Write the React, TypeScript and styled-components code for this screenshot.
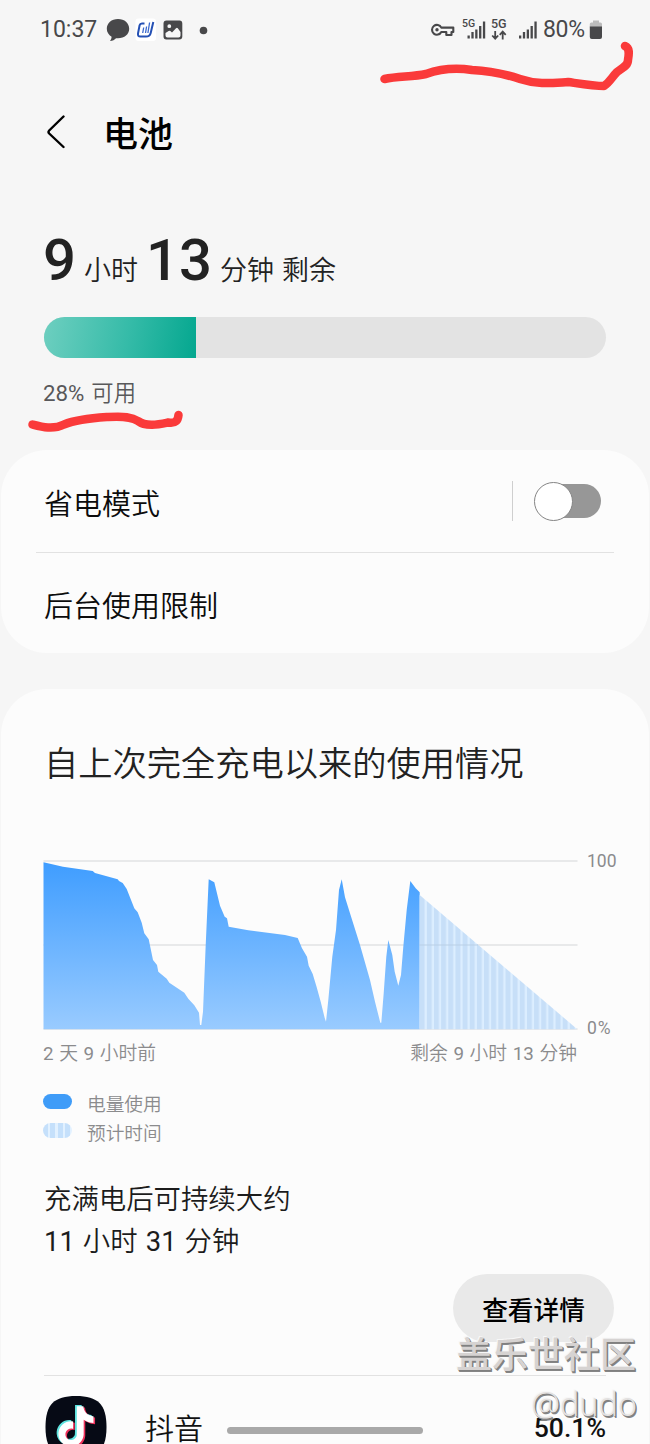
import React, { useState } from "react";
import styled, { createGlobalStyle, css } from "styled-components";

const GlobalStyle = createGlobalStyle`
  *, *::before, *::after { box-sizing: border-box; }
  body {
    margin: 0;
    background: #f6f6f6;
    color: #1c1c1e;
    font-family: Roboto, "Noto Sans CJK SC", sans-serif;
    font-weight: 350;
  }
`;

const Screen = styled.main`
  position: relative;
  width: 650px;
  height: 1444px;
  overflow: hidden;
  background: #f6f6f6;
`;

/* Latin figures are set one step heavier than the Chinese text round them. */
const Num = styled.span`
  font-weight: 400;
`;

/* ---------- status bar ---------- */

const StatusBar = styled.header`
  display: flex;
  align-items: center;
  justify-content: space-between;
  height: 60px;
  padding: 0 47px 0 40px;
  color: #48484a;
`;

const StatusGroup = styled.div`
  display: flex;
  align-items: center;
`;

const StatusText = styled.span<{ $tight?: boolean; $gap?: number }>`
  margin-left: ${(p) => p.$gap ?? 0}px;
  font-size: 23px;
  font-weight: 400;
  line-height: 30px;
  letter-spacing: ${(p) => (p.$tight ? "-0.2px" : "0")};
`;

const StatusIcon = styled.svg<{ $gap: number }>`
  display: block;
  flex: none;
  overflow: visible;
  margin-left: ${(p) => p.$gap}px;
`;

/* ---------- title ---------- */

const TitleBar = styled.div`
  display: flex;
  align-items: center;
  height: 148px;
  padding-left: 46px;
`;

const BackButton = styled.button`
  display: flex;
  padding: 0;
  margin: -4px 37px 0 0;
  border: 0;
  background: none;
`;

const Title = styled.h1`
  margin: 4px 0 0;
  color: #000;
  font-size: 35px;
  font-weight: 500;
  line-height: 48px;
`;

/* ---------- remaining charge ---------- */

const Summary = styled.section`
  padding: 17px 44px 0;
  height: 242px;
`;

const TimeLeft = styled.div`
  display: flex;
  align-items: baseline;
  height: 70px;
  line-height: 70px;
  color: #222;
`;

const BigNumber = styled.span`
  margin-left: -1px;
  font-size: 58px;
  font-weight: 500;
`;

const Unit = styled.span<{ $before: number; $after?: number }>`
  margin: 0 ${(p) => p.$after ?? 0}px 0 ${(p) => p.$before}px;
  font-size: 27px;
`;

const ChargeTrack = styled.div`
  width: 562px;
  height: 41px;
  margin-top: 22px;
  overflow: hidden;
  border-radius: 21px;
  background: #e3e3e3;
`;

const ChargeFill = styled.div`
  height: 100%;
  background: linear-gradient(100deg, #6ecfc0 0%, #35bba8 55%, #04a78f 100%);
`;

const Available = styled.p`
  margin: 20px 0 0 -1px;
  color: #58585a;
  font-size: 22.3px;
  line-height: 30px;
  word-spacing: 1.5px;
`;

/* ---------- cards ---------- */

const Card = styled.section<{ $last?: boolean }>`
  margin: 0 1px;
  border-radius: 46px;
  background: #fcfcfc;
  ${(p) =>
    p.$last &&
    css`
      margin-top: 36px;
      padding: 53px 43px 0;
      height: 800px;
    `}
`;

const SettingRow = styled.div<{ $height: number }>`
  display: flex;
  align-items: center;
  justify-content: space-between;
  height: ${(p) => p.$height}px;
  padding: 2px 48px 0 43px;
  color: #0c0c0c;
  font-size: 29px;
`;

const Divider = styled.hr<{ $inset: string }>`
  height: 1px;
  margin: ${(p) => p.$inset};
  border: 0;
  background: #e2e2e2;
`;

const SwitchArea = styled.div`
  display: flex;
  align-items: center;
  height: 40px;
  margin-top: -2px;
  padding-left: 22px;
  border-left: 1px solid #cfcfcf;
`;

const Track = styled.button<{ $on: boolean }>`
  display: flex;
  align-items: center;
  justify-content: ${(p) => (p.$on ? "flex-end" : "flex-start")};
  width: 66px;
  height: 34px;
  padding: 0;
  border: 0;
  border-radius: 17px;
  background: ${(p) => (p.$on ? "#3e91ff" : "#979797")};
`;

const Thumb = styled.span`
  flex: none;
  width: 39px;
  height: 39px;
  margin-left: -1px;
  border: 1.5px solid #858585;
  border-radius: 50%;
  background: #fff;
`;

/* ---------- usage ---------- */

const UsageTitle = styled.h2`
  margin: 0;
  color: #222;
  font-size: 34.25px;
  font-weight: 350;
  line-height: 44px;
  white-space: nowrap;
`;

const ChartRow = styled.div`
  display: flex;
  height: 187px;
  margin-top: 65px;
  margin-left: -1px;
`;

const Chart = styled.svg`
  display: block;
  flex: none;
  margin-top: 9px;
`;

const AxisLabels = styled.div`
  display: flex;
  flex-direction: column;
  justify-content: space-between;
  margin-left: 9px;
  color: #8b8b8d;
  font-size: 17.5px;
  font-weight: 400;
  line-height: 20px;
`;

const AxisLabel = styled.span<{ $spaced?: boolean }>`
  letter-spacing: ${(p) => (p.$spaced ? "1px" : "0")};
`;

const TimeLabels = styled.div`
  display: flex;
  justify-content: space-between;
  width: 534px;
  margin: 3px 0 0 -1px;
  color: #8b8b8d;
  font-size: 18.8px;
  line-height: 26px;
  word-spacing: 1px;
`;

const Legend = styled.ul`
  margin: 21px 0 0;
  padding: 0;
  list-style: none;
`;

const LegendItem = styled.li`
  display: flex;
  align-items: flex-start;
  gap: 15px;
  height: 29px;
  margin-left: -1px;
  color: #8b8b8d;
  font-size: 18.7px;
  line-height: 34px;
`;

const Swatch = styled.span<{ $striped?: boolean }>`
  width: 29px;
  height: 15px;
  margin-top: 6px;
  border-radius: 8px;
  background: ${(p) =>
    p.$striped
      ? "repeating-linear-gradient(90deg, #c5e0fb 0 5px, #e2f1ff 5px 7.3px)"
      : "#3f9cf8"};
`;

const FullCharge = styled.p`
  margin: 33px 0 0;
  color: #1c1c1c;
  font-size: 27.4px;
  line-height: 42px;
  word-spacing: 1.4px;
`;

const Actions = styled.div`
  display: flex;
  justify-content: flex-end;
  margin: 11px -8px 0 0;
`;

const DetailsButton = styled.button`
  width: 161px;
  height: 68px;
  padding: 6px 0 0;
  border: 0;
  border-radius: 34px;
  background: #e9e9e9;
  color: #000;
  font: 500 25.7px/30px Roboto, "Noto Sans CJK SC", sans-serif;
`;

const AppRow = styled.div`
  display: flex;
  align-items: center;
  height: 64px;
  margin-top: 19px;
  padding: 0 0 0 1px;
  color: #111;
`;

const AppName = styled.span`
  flex: 1;
  margin: 6px 0 0 38px;
  font-size: 29px;
  line-height: 36px;
`;

const AppShare = styled.span`
  margin-top: 2px;
  font-size: 26.6px;
  font-weight: 500;
  line-height: 28px;
`;

/* ---------- overlays ---------- */

const HomeHandle = styled.div`
  position: absolute;
  left: 227px;
  top: 1427px;
  width: 196px;
  height: 7px;
  border-radius: 4px;
  background: #a9a9a9;
`;

const Watermark = styled.div`
  position: absolute;
  right: 14px;
  top: 1331px;
  display: flex;
  flex-direction: column;
  align-items: flex-end;
  color: #d6d3d2;
  text-shadow: 1px 1px 0 #808080, 1.5px 1.5px 0 #858585, -1px -1px 0 #f7f7f7;
`;

const Community = styled.span`
  font-size: 36px;
  font-weight: 500;
  line-height: 50px;
`;

const Handle = styled.span`
  margin-right: -1px;
  color: #e4e2e1;
  font-family: "Noto Sans", sans-serif;
  font-size: 32.3px;
  line-height: 44px;
`;

const Scribbles = styled.svg`
  position: absolute;
  inset: 0;
  pointer-events: none;
`;

/* Battery history, in chart units: x runs with time, y downwards from 100 %. */
const history =
  "0.5,1.3 20,5.7 49.7,10 52,12 74.7,18.3 76,20 79.7,22 83.7,28 91.3,47.3 94.7,51.3 98.7,61.7 101.3,72.3 105.7,78.3 110,99 114,104 115.3,110.7 123.7,117.7 126.3,121.7 141.3,131.7 145.3,137.7 151.3,144.3 156,151.7 157,164 158.3,164 160,150.7 162.7,84 165.7,18.3 171.3,21.3 177,44.7 181.7,55.7 184,57.3 185.7,65.7 205.3,69.3 242,74 254.7,77 259,87.3 264,95.7 265.7,104.7 269.7,113 273.7,126.3 277.7,140.7 281.7,157 283,160.7 285.3,139 289.3,95.7 293,69 296,29 298.7,18.3 302,36.3 307,52.3 317,84 327,119 332,140.7 337.3,161.7 338.3,161.7 340.7,132.3 343.3,95.7 345.3,79 349.3,94 351.7,110.7 355.3,124.7 358,114 360.3,85.7 363.7,49 367.3,20 372.7,27.3 376.7,31.3";

function UsageChart() {
  return (
    <Chart width="535" height="170" viewBox="0 -1 535 170">
      <defs>
        <linearGradient id="level" x1="0" y1="0" x2="0" y2="1">
          <stop offset="0" stopColor="#3f9dff" />
          <stop offset="1" stopColor="#99cbff" />
        </linearGradient>
        <pattern id="stripes" x="376.7" width="7.15" height="10" patternUnits="userSpaceOnUse">
          <rect width="7.15" height="10" fill="#c7dff8" />
          <rect x="4.9" width="2.25" height="10" fill="#dceeff" />
        </pattern>
      </defs>
      <path d="M0.5 0H534.5M0.5 84H534.5M0.5 168H534.5" stroke="#e1e2e4" strokeWidth="1.6" />
      <polygon points={`${history} 376.7,168.2 0.5,168.2`} fill="url(#level)" />
      <polygon points="376.7,34 534.3,168.2 376.7,168.2" fill="url(#stripes)" />
      <path d="M376.7 84H435" stroke="#b9cfe6" strokeWidth="1.2" />
    </Chart>
  );
}

function SignalBars({ x }: { x: number }) {
  const tops = [15.5, 12, 9.5, 6, 1.5];
  return (
    <>
      {tops.map((top, i) => (
        <rect key={top} x={x + i * 3.85} y={top} width="2.3" height={18.5 - top} fill="#48484a" />
      ))}
    </>
  );
}

const notePath =
  "M12.525.02c1.31-.02 2.61-.01 3.91-.02.08 1.53.63 3.09 1.75 4.17 1.12 1.11 2.7 1.62 4.24 1.79v4.03c-1.44-.05-2.89-.35-4.2-.97-.57-.26-1.1-.59-1.62-.93-.01 2.92.01 5.84-.02 8.75-.08 1.4-.54 2.79-1.35 3.94-1.31 1.92-3.58 3.17-5.91 3.21-1.43.08-2.86-.31-4.08-1.03-2.02-1.19-3.44-3.37-3.65-5.71-.02-.5-.03-1-.01-1.49.18-1.9 1.12-3.72 2.58-4.96 1.66-1.44 3.98-2.13 6.15-1.72.02 1.48-.04 2.96-.04 4.44-.99-.32-2.15-.23-3.02.37-.63.41-1.11 1.04-1.36 1.75-.21.51-.15 1.07-.14 1.61.24 1.64 1.82 3.02 3.5 2.87 1.12-.01 2.19-.66 2.77-1.61.19-.33.4-.67.41-1.06.1-1.79.06-3.57.07-5.36.01-4.03-.01-8.05.02-12.07z";

function DouyinIcon() {
  return (
    <svg width="62" height="62" viewBox="0 0 62 62">
      <path d="M31 0C53 0 61.5 8.5 61.5 31S53 62 31 62 .5 53.5 .5 31 9 0 31 0Z" fill="#060a15" />
      <path d={notePath} transform="translate(9 9) scale(1.68)" fill="#5de3df" />
      <path d={notePath} transform="translate(12.4 11.4) scale(1.68)" fill="#f0325c" />
      <path d={notePath} transform="translate(10.8 10.2) scale(1.68)" fill="#fff" />
    </svg>
  );
}

export default function App() {
  const [powerSaving, setPowerSaving] = useState(false);
  const charge = 27;

  return (
    <Screen>
      <GlobalStyle />
      <StatusBar>
        <StatusGroup>
          <StatusText>10:37</StatusText>
          <StatusIcon $gap={9} width="24" height="24" viewBox="0 0 24 24">
            <path d="M12 1C5.5 1 .8 5.2 .8 10.8c0 3.4 1.9 6.2 4.8 8-.1 1.6-.6 3-1.6 4.2 2.6-.1 4.7-1.2 6-2.8 7.6.9 13.2-3.4 13.2-9.4C23.2 5.2 18.5 1 12 1Z" fill="#48484a" />
          </StatusIcon>
          <StatusIcon $gap={5} width="22" height="24" viewBox="0 0 22 24">
            <rect x="0.5" y="0.5" width="20.5" height="22.5" rx="3" fill="#fff" />
            <path d="M9.5 5.5H7Q5 5.5 4.6 7.3L3 15.5Q2.6 18.6 5.4 18.6H11Q14.8 18.6 15.7 15L18.3 4" fill="none" stroke="#2450b4" strokeWidth="2" />
            <path d="M8.7 9.5 7.7 15M11.6 8.5 10.5 15M14.6 4.5 12.9 15" fill="none" stroke="#3867cc" strokeWidth="1.3" />
          </StatusIcon>
          <StatusIcon $gap={6} width="20" height="20" viewBox="0 0 20 20">
            <path fillRule="evenodd" d="M3.5.5h13Q19.3.5 19.3 3.5v13q0 3-3 3h-13q-2.8 0-2.8-3v-13q0-3 3-3ZM2.5 13v2.5q0 2 2 2h11q2 0 2-2v-3.5L14.8 8.3Q14 7.4 13 8.3L9 12.5 7.3 11Q6.5 10.3 5.6 11ZM6.3 4.3a1.9 1.9 0 1 0 0 3.8 1.9 1.9 0 0 0 0-3.8Z" fill="#48484a" />
          </StatusIcon>
          <StatusIcon $gap={16} width="9" height="9" viewBox="0 0 9 9">
            <circle cx="4.5" cy="4.5" r="3.8" fill="#48484a" />
          </StatusIcon>
        </StatusGroup>
        <StatusGroup>
          <StatusIcon $gap={0} width="24" height="16" viewBox="0 0 24 16">
            <path d="M10.3 5.6H22.3V10H20.5V13H15.3V10H10.3A4.9 4.9 0 1 1 10.3 5.6Z" fill="none" stroke="#48484a" strokeWidth="2.1" strokeLinejoin="round" />
            <circle cx="6" cy="7.8" r="1.7" fill="#48484a" />
          </StatusIcon>
          <StatusIcon $gap={7} width="24" height="20" viewBox="0 0 24 20">
            <text x="0" y="7" fontSize="10.5" fontWeight="500" fill="#48484a">5G</text>
            <SignalBars x={5.5} />
          </StatusIcon>
          <StatusIcon $gap={5} width="17" height="22" viewBox="0 0 17 22">
            <text x="0" y="9.3" fontSize="12.5" fontWeight="500" fill="#48484a">5G</text>
            <path d="M4.2 12v7.5M1.2 16.5l3 3.2 3-3.2M11.7 20.5V13M8.7 15.8l3-3.2 3 3.2" fill="none" stroke="#48484a" strokeWidth="1.8" />
          </StatusIcon>
          <StatusIcon $gap={11} width="20" height="20" viewBox="0 0 20 20">
            <SignalBars x={0} />
          </StatusIcon>
          <StatusText $tight $gap={4}>80%</StatusText>
          <StatusIcon $gap={4} width="14" height="20" viewBox="0 0 14 20">
            <path d="M4 0.5h6v2h1.5q1.5 0 1.5 1.5v3.5H.8V4q0-1.5 1.5-1.5H4Z" fill="#bcbcbc" />
            <path d="M.8 6.5H13V17q0 2-2 2H2.8q-2 0-2-2Z" fill="#48484a" />
          </StatusIcon>
        </StatusGroup>
      </StatusBar>

      <TitleBar>
        <BackButton aria-label="返回">
          <svg width="20" height="34" viewBox="0 0 20 34">
            <path d="M17.5 1.5 3.2 15.5Q1.8 17 3.2 18.5L17.5 32" fill="none" stroke="#000" strokeWidth="2.4" strokeLinecap="round" />
          </svg>
        </BackButton>
        <Title>电池</Title>
      </TitleBar>

      <Summary>
        <TimeLeft>
          <BigNumber>9</BigNumber>
          <Unit $before={8} $after={9}>小时</Unit>
          <BigNumber>13</BigNumber>
          <Unit $before={8} $after={8}>分钟</Unit>
          <Unit $before={0}>剩余</Unit>
        </TimeLeft>
        <ChargeTrack>
          <ChargeFill style={{ width: `${charge}%` }} />
        </ChargeTrack>
        <Available>
          <Num>28%</Num> 可用
        </Available>
      </Summary>

      <Card>
        <SettingRow $height={102}>
          省电模式
          <SwitchArea>
            <Track
              $on={powerSaving}
              role="switch"
              aria-checked={powerSaving}
              onClick={() => setPowerSaving(!powerSaving)}
            >
              <Thumb />
            </Track>
          </SwitchArea>
        </SettingRow>
        <Divider $inset="0 35px" />
        <SettingRow $height={100}>后台使用限制</SettingRow>
      </Card>

      <Card $last>
        <UsageTitle>自上次完全充电以来的使用情况</UsageTitle>
        <ChartRow>
          <UsageChart />
          <AxisLabels>
            <AxisLabel>100</AxisLabel>
            <AxisLabel $spaced>0%</AxisLabel>
          </AxisLabels>
        </ChartRow>
        <TimeLabels>
          <span>
            <Num>2</Num> 天 <Num>9</Num> 小时前
          </span>
          <span>
            剩余 <Num>9</Num> 小时 <Num>13</Num> 分钟
          </span>
        </TimeLabels>
        <Legend>
          <LegendItem>
            <Swatch />
            电量使用
          </LegendItem>
          <LegendItem>
            <Swatch $striped />
            预计时间
          </LegendItem>
        </Legend>
        <FullCharge>
          充满电后可持续大约
          <br />
          <Num>11</Num> 小时 <Num>31</Num> 分钟
        </FullCharge>
        <Actions>
          <DetailsButton>查看详情</DetailsButton>
        </Actions>
        <Divider $inset="33px 0 0" />
        <AppRow>
          <DouyinIcon />
          <AppName>抖音</AppName>
          <AppShare>50.1%</AppShare>
        </AppRow>
      </Card>

      <HomeHandle />
      <Watermark>
        <Community>盖乐世社区</Community>
        <Handle>@dudo</Handle>
      </Watermark>
      <Scribbles width="650" height="1444" viewBox="0 0 650 1444" fill="none" stroke="#fa3a3a" strokeWidth="8.5" strokeLinecap="round" strokeLinejoin="round">
        <path d="M384.5 79C398 76 412 77 426 74C440 69 458 68 472 70C492 71 508 75 520 79C538 85 552 83 568 82C582 84 594 86 604 86C610 82 612 77 617 72C622 68 628 66 628 60C629 54 630 48 625 46" />
        <path d="M32.5 424.5C42 427 53 430 64 424.5C78 419 94 418 108 417C124 416 132 417 138 421C146 427 158 424.5 168 422.5C176 424 178 420 178.5 415" />
      </Scribbles>
    </Screen>
  );
}
